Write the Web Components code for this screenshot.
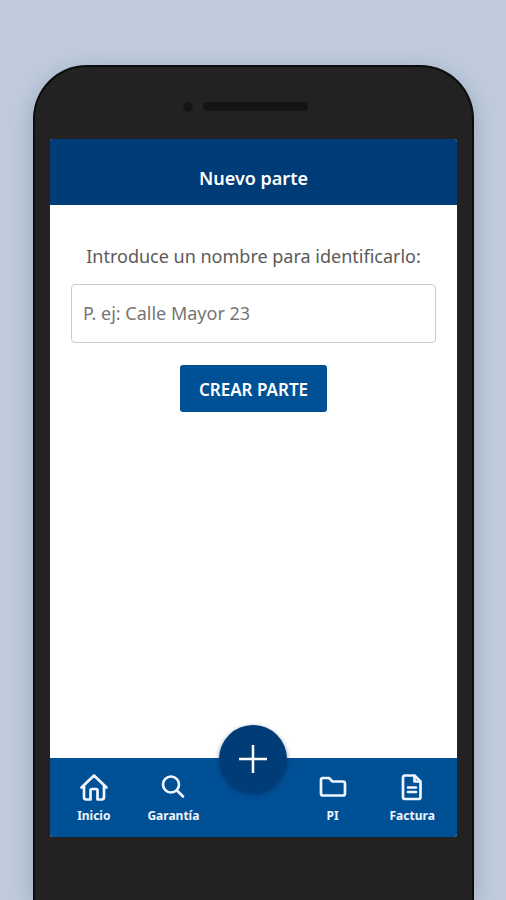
<!DOCTYPE html>
<html lang="es">
<head>
<meta charset="utf-8">
<meta name="viewport" content="width=device-width, initial-scale=1">
<title>Nuevo parte</title>
<style>
  body {
    margin: 0;
    min-height: 100vh;
    display: flex;
    background: #c0ccde;
    font-family: "Noto Sans", "Open Sans", sans-serif;
  }
</style>
</head>
<body>
<phone-frame>
  <app-header slot="header">Nuevo parte</app-header>
  <parte-form></parte-form>
  <tab-bar slot="footer">
    <tab-item icon="home">Inicio</tab-item>
    <tab-item icon="search">Garantía</tab-item>
    <add-button></add-button>
    <tab-item icon="folder">PI</tab-item>
    <tab-item icon="file">Factura</tab-item>
  </tab-bar>
</phone-frame>
<script>
  const define = (name, html, setup) => {
    const template = document.createElement('template');
    template.innerHTML = html;
    customElements.define(name, class extends HTMLElement {
      constructor() {
        super();
        this.attachShadow({ mode: 'open' }).append(template.content.cloneNode(true));
      }
      connectedCallback() { if (setup) setup(this); }
    });
  };

  define('phone-frame', `
    <style>
      :host {
        box-sizing: border-box;
        flex: 1;
        display: flex;
        flex-direction: column;
        margin: 65px 32px 0 33px;
        padding: 0 14px 63px;
        border: 2px solid #0c0c0c;
        border-bottom: 0;
        border-radius: 54px 54px 0 0;
        background: #222;
        box-shadow: 0 6px 24px rgba(40, 60, 90, .28);
      }
      .top { box-sizing: border-box; display: flex; align-items: center; justify-content: center; gap: 10px; height: 72px; padding: 7px 16px 0 0; }
      .camera { width: 10px; height: 10px; border-radius: 50%; background: #161616; }
      .speaker { width: 105px; height: 9px; border-radius: 5px; background: #141414; }
      .screen { flex: 1; display: flex; flex-direction: column; margin-inline: 1px; border-radius: 3px; overflow: hidden; background: #fff; }
      main { flex: 1; }
    </style>
    <div class="top"><span class="camera"></span><span class="speaker"></span></div>
    <div class="screen">
      <slot name="header"></slot>
      <main><slot></slot></main>
      <slot name="footer"></slot>
    </div>`);

  define('app-header', `
    <style>
      :host { display: block; background: #003c78; color: #fff; }
      h1 { margin: 0; padding: 27px 16px 15px; font-size: 18px; line-height: 24px; font-weight: 600; text-align: center; }
    </style>
    <h1><slot></slot></h1>`);

  define('parte-form', `
    <style>
      :host { display: block; padding: 39px 21px; }
      form { display: flex; flex-direction: column; align-items: center; }
      label { font-size: 18px; line-height: 24px; color: #5a5a5a; white-space: nowrap; }
      input {
        box-sizing: border-box; width: 100%; height: 59px; margin: 16px 0 22px; padding: 0 11px 2px;
        border: 1px solid #ccc; border-radius: 4px; background: #fff;
        font: 400 18px/24px "Noto Sans", "Open Sans", sans-serif; color: #444;
      }
      input::placeholder { color: #757575; opacity: 1; }
      button {
        height: 47px; padding: 2px 19px 0; border: 0; border-radius: 3px; background: #005096; color: #fff;
        font: 600 17px/24px "Noto Sans", "Open Sans", sans-serif;
      }
    </style>
    <form>
      <label for="nombre">Introduce un nombre para identificarlo:</label>
      <input id="nombre" type="text" placeholder="P. ej: Calle Mayor 23">
      <button type="button">CREAR PARTE</button>
    </form>`);

  define('tab-bar', `
    <style>
      :host { display: block; background: #005096; }
      nav { display: grid; grid-template-columns: repeat(5, 1fr); height: 79px; padding: 0 5px 0 4px; }
    </style>
    <nav aria-label="Principal"><slot></slot></nav>`);

  const icons = {
    home: '<path d="M2.500 15.500 15 3.500l12.500 12M5 14v11q0 2.500 2.500 2.500h4V18.500q0-1.500 1.500-1.500h4q1.500 0 1.500 1.500V27.500h4q2.500 0 2.500-2.500V14"/>',
    search: '<circle cx="13" cy="12.500" r="8"/><path d="m19 18.500 6 6"/>',
    folder: '<path d="M5 6h6l3.500 3.500H25q2 0 2 2V21.500q0 2-2 2H5q-2 0-2-2V8q0-2 2-2Z"/>',
    file: '<path d="M8 3.500h9.500L23.500 9.500V25q0 2-2 2H8q-2 0-2-2V5.500q0-2 2-2Z"/><path d="M17.500 4v5.500h5.500"/><path d="M11 15.500h8M11 20h8"/>'
  };

  define('tab-item', `
    <style>
      :host { display: block; min-width: 0; }
      a { display: flex; flex-direction: column; align-items: center; gap: 6px; padding-top: 14px; color: #f0f5ff; text-decoration: none; font-size: 12px; line-height: 16px; font-weight: 700; }
      svg { width: 30px; height: 30px; fill: none; stroke: currentColor; stroke-width: 2.700; stroke-linecap: round; stroke-linejoin: round; }
    </style>
    <a href="#"><svg viewBox="0 0 30 30" aria-hidden="true"></svg><span><slot></slot></span></a>`,
    el => { el.shadowRoot.querySelector('svg').innerHTML = icons[el.getAttribute('icon')]; });

  define('add-button', `
    <style>
      :host { display: flex; justify-content: center; align-items: flex-start; }
      button {
        flex: none; display: grid; place-items: center; width: 68px; height: 68px; margin-top: -33px; padding: 0;
        border: 0; border-radius: 50%; background: #003c78; color: #fff; box-shadow: 0 2px 5px rgba(0, 45, 100, .6);
      }
      svg { width: 30px; height: 30px; fill: none; stroke: currentColor; stroke-width: 2.500; }
    </style>
    <button type="button" aria-label="Añadir"><svg viewBox="0 0 30 30" aria-hidden="true"><path d="M15 1v28M1 15h28"/></svg></button>`);
</script>
</body>
</html>
